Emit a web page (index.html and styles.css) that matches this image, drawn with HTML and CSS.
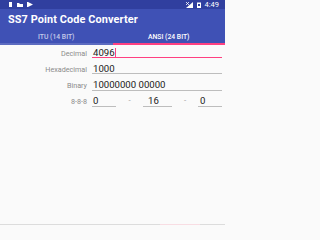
FILE: index.html
```html
<!DOCTYPE html>
<html>
<head>
<meta charset="utf-8">
<link rel="stylesheet" href="styles.css">
</head>
<body>
<div class="status">
  <div class="sicons">
    <svg width="5" height="5" viewBox="0 0 5 5"><rect x="1" y="0" width="3" height="5" fill="#fff"/></svg>
    <svg width="6" height="5" viewBox="0 0 6 5"><path d="M0 1h2l1 1h3v3H0z" fill="#fff"/></svg>
    <svg width="6" height="5" viewBox="0 0 6 5"><path d="M0 0h1v5H0zM1 0l5 2.5-5 2.5z" fill="#fff"/></svg>
  </div>
  <div class="sright">
    <svg width="7" height="6" viewBox="0 0 7 6"><path d="M7 0v6H0z" fill="#fff"/><path d="M0 0l3 3M3 0L0 3" stroke="#fff" stroke-width="0.8"/></svg>
    <svg width="4" height="6" viewBox="0 0 4 6"><rect x="0" y="0.5" width="4" height="5.5" fill="#fff"/><rect x="1" y="2" width="2" height="2" fill="#303f9f"/></svg>
    <span class="time">4:49</span>
  </div>
</div>
<div class="appbar"><span class="title">SS7 Point Code Converter</span></div>
<div class="tabs">
  <div class="tab">ITU (14 BIT)</div>
  <div class="tab active">ANSI (24 BIT)</div>
</div>
<div class="indicator"><div class="ind-left"></div><div class="ind-right"></div></div>
<div class="form">
  <div class="row">
    <div class="label">Decimal</div>
    <div class="field focus"><span class="val">4096</span><span class="cursor"></span></div>
  </div>
  <div class="row">
    <div class="label">Hexadecimal</div>
    <div class="field"><span class="val">1000</span></div>
  </div>
  <div class="row">
    <div class="label">Binary</div>
    <div class="field"><span class="val">10000000 00000</span></div>
  </div>
  <div class="row">
    <div class="label">8-8-8</div>
    <div class="triple">
      <div class="field f1"><span class="val">0</span></div>
      <span class="dash">-</span>
      <div class="field f2"><span class="val">16</span></div>
      <span class="dash">-</span>
      <div class="field f3"><span class="val">0</span></div>
    </div>
  </div>
</div>
<div class="bottom"><div class="bpink"></div></div>
</body>
</html>
```
FILE: styles.css
```css
html, body {
  margin: 0;
  padding: 0;
}
html {
  background: #fafafa;
}
body {
  width: 225px;
  height: 225px;
  overflow: hidden;
  background: #fafafa;
  font-family: Roboto, "Liberation Sans", sans-serif;
  position: relative;
}
.status {
  height: 9px;
  background: #303f9f;
  display: flex;
  align-items: center;
  justify-content: space-between;
  padding: 0 6px 0 8px;
}
.sicons, .sright {
  display: flex;
  align-items: center;
  gap: 4px;
}
.sicons svg, .sright svg { display: block; }
.time {
  color: #fff;
  font-size: 7.5px;
  line-height: 9px;
}
.appbar {
  height: 20px;
  background: #3f51b5;
  display: flex;
  align-items: center;
  padding-left: 8px;
}
.title {
  color: #fff;
  font-size: 10.9px;
  font-weight: bold;
  letter-spacing: 0.1px;
}
.tabs {
  height: 14px;
  background: #3f51b5;
  display: flex;
}
.tab {
  flex: 1;
  display: flex;
  align-items: center;
  justify-content: center;
  color: #c5cae9;
  font-size: 6.8px;
  font-weight: 500;
  padding-top: 1px;
}
.tab.active {
  color: #fff;
}
.indicator {
  height: 2px;
  display: flex;
}
.ind-left {
  flex: 1;
  background: #5c6bc0;
}
.ind-right {
  flex: 1;
  background: #ff4081;
}
.form {
  padding-top: 2px;
  display: flex;
  flex-direction: column;
  gap: 5.3px;
}
.row {
  display: flex;
  align-items: flex-end;
  height: 11px;
}
.label {
  width: 92px;
  text-align: right;
  color: #8a8a8a;
  font-size: 7.2px;
  line-height: 5px;
  padding-right: 5px;
  padding-bottom: 2.5px;
  box-sizing: border-box;
  white-space: nowrap;
}
.field {
  flex: 1;
  height: 11px;
  border-bottom: 1px solid #bdbdbd;
  margin-right: 3px;
  display: flex;
  align-items: flex-end;
  padding-left: 1px;
  padding-bottom: 1.5px;
  box-sizing: border-box;
}
.field.focus {
  border-bottom: 1px solid #ff4081;
  padding-bottom: 0;
}
.val {
  color: #212121;
  font-size: 9.6px;
  line-height: 7px;
}
.field.focus .val {
  margin-bottom: 1.5px;
}
.cursor {
  width: 1px;
  height: 9px;
  margin-left: 0.5px;
  background: #ff4081;
}
.triple {
  flex: 1;
  display: flex;
  align-items: flex-end;
}
.triple .field {
  margin-right: 0;
}
.f1 { flex: 0 0 24px; }
.f2 { flex: 0 0 29px; padding-left: 5px; }
.f3 { flex: 0 0 24px; padding-left: 2px; }
.dash {
  width: 27px;
  text-align: center;
  color: #9e9e9e;
  font-size: 8px;
  line-height: 6px;
  padding-bottom: 2.5px;
}
.triple .dash:nth-of-type(2) { width: 26px; }
.bottom {
  position: absolute;
  left: 0;
  right: 0;
  bottom: 0;
  height: 1px;
  background: #dcdcdc;
}
.bpink {
  position: absolute;
  left: 160px;
  width: 40px;
  height: 1px;
  background: #f8dde3;
}
```
